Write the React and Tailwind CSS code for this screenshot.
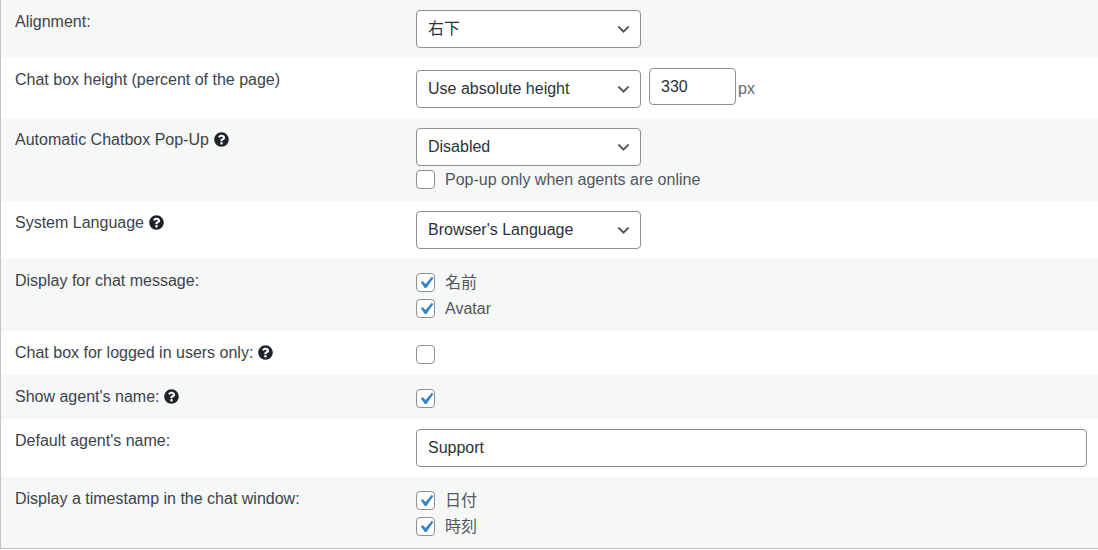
// Chat settings form — alternating rows of label + control
import { FaQuestionCircle } from 'react-icons/fa';

const font = { fontFamily: '"Liberation Sans", Arial, "Noto Sans CJK JP", sans-serif' };

const Help = () => (
  <FaQuestionCircle className="inline-block ml-[5px] w-[15px] h-[15px] text-[#1d2327] align-[-2px]" />
);

const Chevron = () => (
  <svg viewBox="0 0 20 20" className="w-[17px] h-[17px] shrink-0" fill="#50575e">
    <path d="M5 6l5 5 5-5 2 1-7 7-7-7 2-1z" />
  </svg>
);

const Select = ({ value, className = '' }) => (
  <div
    className={`w-[225px] h-[38px] flex items-center justify-between pl-[11px] pr-[8px] bg-white border border-[#8c8f94] rounded-[4px] text-[16px] text-[#2c3338] ${className}`}
  >
    <span>{value}</span>
    <Chevron />
  </div>
);

const Check = ({ checked, label, single }) => (
  <div className={`flex items-start pt-[4px] ${single ? 'h-[24px]' : 'h-[26px]'}`}>
    <span className="relative w-[19px] h-[19px] shrink-0 bg-white border border-[#8c8f94] rounded-[4px]">
      {checked && (
        <svg
          viewBox="0 0 20 20"
          className="absolute left-[-3px] top-[-3px] w-[24px] h-[24px]"
          fill="#3582c4"
        >
          <path d="M14.83 4.89l1.34.94-5.81 8.38H9.02L5.78 9.67l1.34-1.25 2.57 2.4z" />
        </svg>
      )}
    </span>
    {label && <span className="ml-[10px] text-[16px] leading-[19px] text-[#50575e]">{label}</span>}
  </div>
);

const Row = ({ label, help, odd, pb = 'pb-[10px]', children }) => (
  <div className={`grid grid-cols-[415px_1fr] ${odd ? 'bg-[#f6f7f7]' : 'bg-white'}`}>
    <div className="pl-[14px] pt-[12px] text-[16px] leading-[20px] text-[#3c434a]">
      {label}
      {help && <Help />}
    </div>
    <div className={`pt-[10px] pr-[11px] ${pb}`}>{children}</div>
  </div>
);

const App = () => {
  return (
    <div style={font} className="w-[1098px] h-[550px] bg-white">
      <div className="border-l border-b border-[#c3c4c7]">
        <Row label="Alignment:" odd>
          <Select value="右下" />
        </Row>

        <Row label="Chat box height (percent of the page)">
          <div className="flex items-start">
            <Select value="Use absolute height" className="mt-[2px] h-[37px]" />
            <div className="ml-[8px] w-[87px] h-[37px] flex items-center px-[11px] bg-white border border-[#8c8f94] rounded-[4px] text-[16px] text-[#2c3338]">
              330
            </div>
            <span className="ml-[2px] mt-[9px] text-[16px] text-[#646970]">px</span>
          </div>
        </Row>

        <Row label="Automatic Chatbox Pop-Up" help odd pb="pb-[9px]">
          <Select value="Disabled" />
          <Check label="Pop-up only when agents are online" />
        </Row>

        <Row label="System Language" help>
          <Select value="Browser's Language" />
        </Row>

        <Row label="Display for chat message:" odd>
          <Check checked label="名前" />
          <Check checked label="Avatar" />
        </Row>

        <Row label="Chat box for logged in users only:" help>
          <Check single />
        </Row>

        <Row label="Show agent's name:" help odd>
          <Check checked single />
        </Row>

        <Row label="Default agent's name:">
          <div className="h-[38px] flex items-center px-[11px] bg-white border border-[#8c8f94] rounded-[4px] text-[16px] text-[#2c3338]">
            Support
          </div>
        </Row>

        <Row label="Display a timestamp in the chat window:" odd pb="pb-[9px]">
          <Check checked label="日付" />
          <Check checked label="時刻" />
        </Row>
      </div>
    </div>
  );
};

export default App;
